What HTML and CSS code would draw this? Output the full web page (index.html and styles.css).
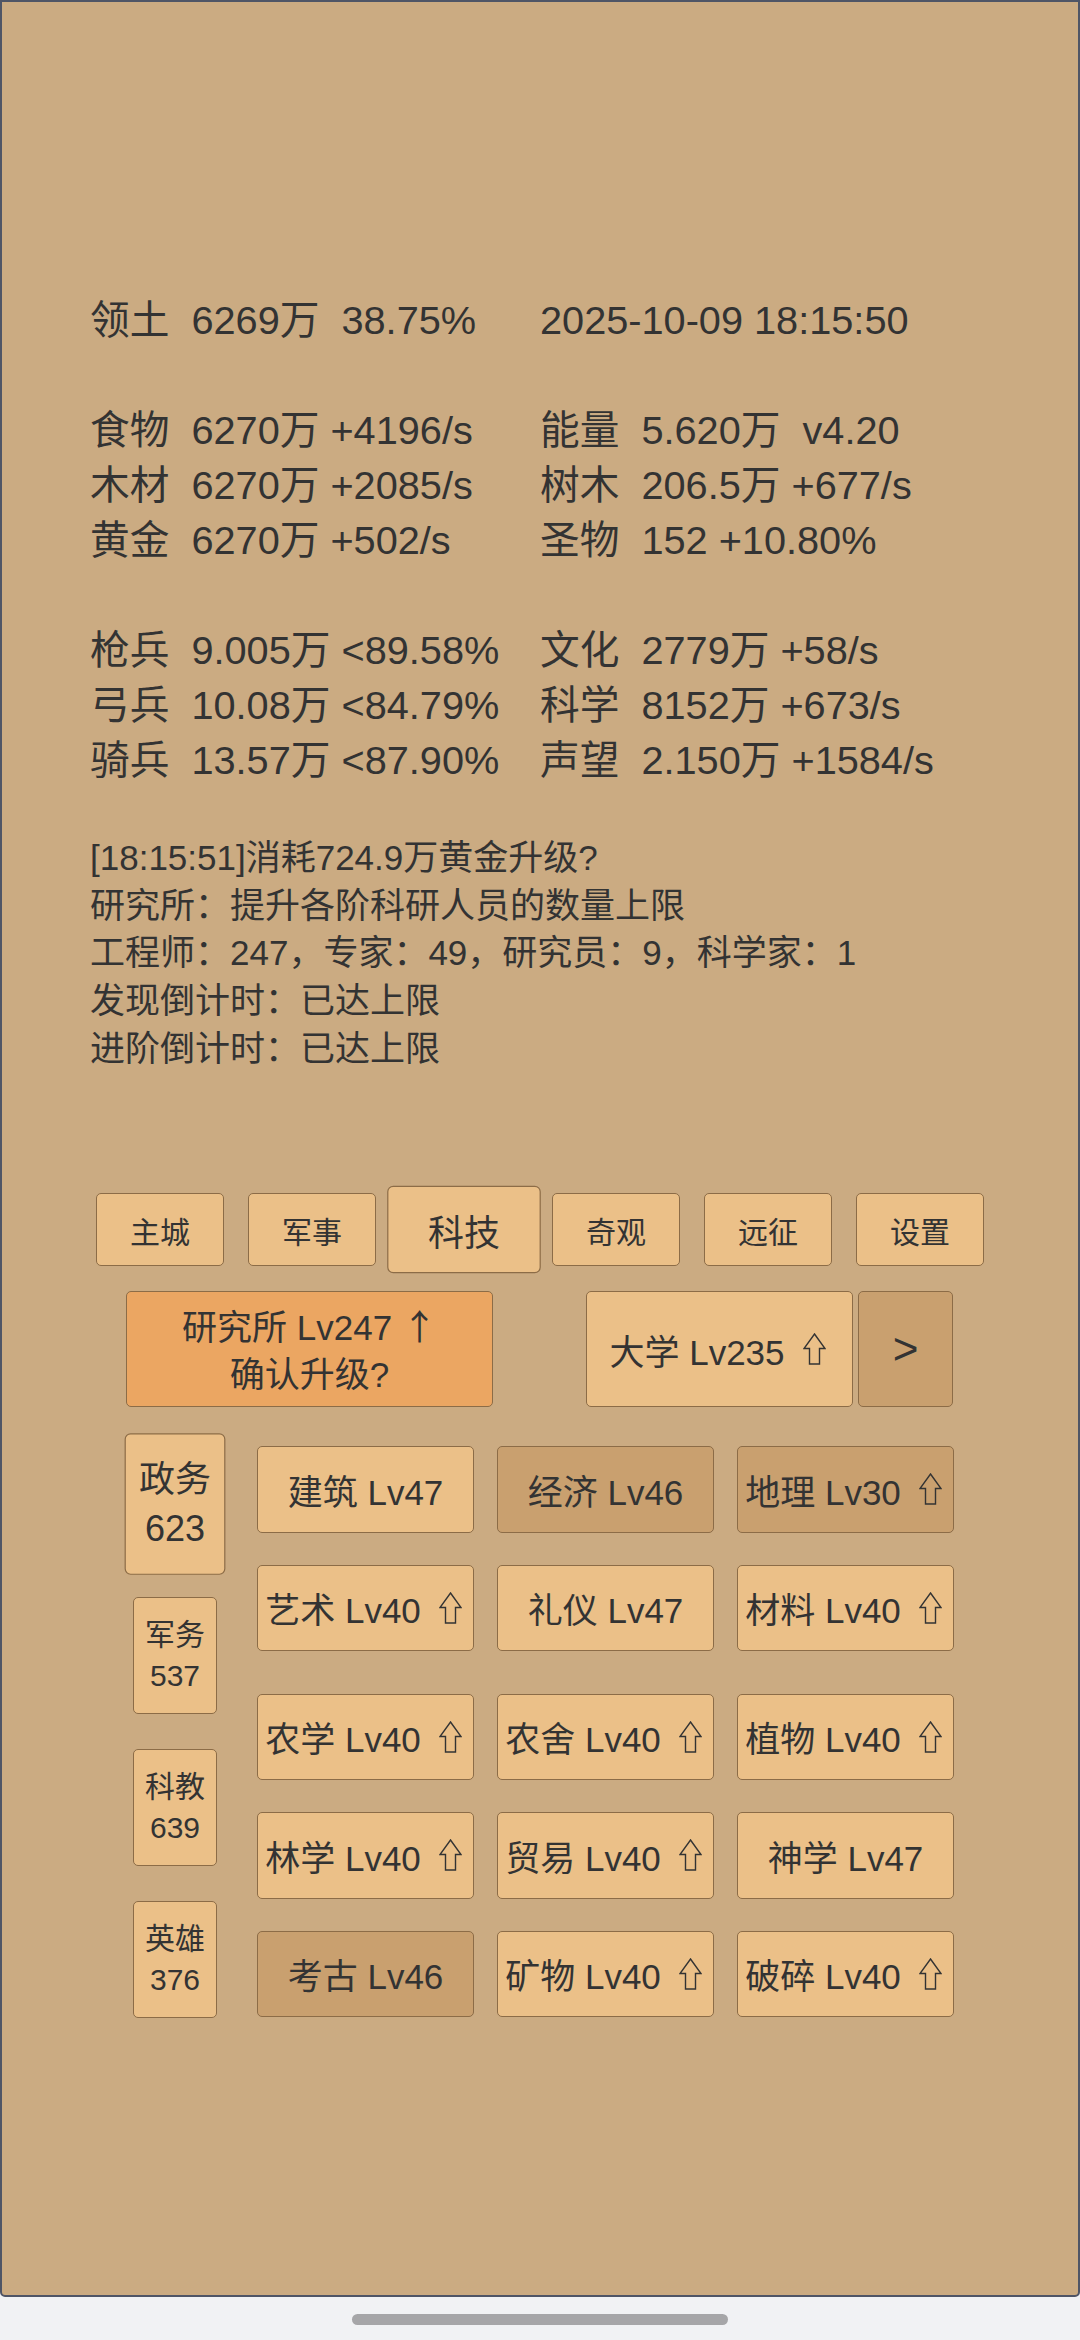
FILE: index.html
```html
<!DOCTYPE html>
<html lang="zh-CN">
<head>
<meta charset="utf-8">
<meta name="viewport" content="width=1080">
<link rel="stylesheet" href="styles.css">
</head>
<body>
<div class="panel">
  <div class="stats">
    <div class="cell">领土  6269万  38.75%</div><div class="cell">2025-10-09 18:15:50</div>
    <div class="blank"></div>
    <div class="cell">食物  6270万 +4196/s</div><div class="cell">能量  5.620万  v4.20</div>
    <div class="cell">木材  6270万 +2085/s</div><div class="cell">树木  206.5万 +677/s</div>
    <div class="cell">黄金  6270万 +502/s</div><div class="cell">圣物  152 +10.80%</div>
    <div class="blank"></div>
    <div class="cell">枪兵  9.005万 &lt;89.58%</div><div class="cell">文化  2779万 +58/s</div>
    <div class="cell">弓兵  10.08万 &lt;84.79%</div><div class="cell">科学  8152万 +673/s</div>
    <div class="cell">骑兵  13.57万 &lt;87.90%</div><div class="cell">声望  2.150万 +1584/s</div>
  </div>

  <div class="log">
    <div>[18:15:51]消耗724.9万黄金升级?</div>
    <div>研究所：提升各阶科研人员的数量上限</div>
    <div>工程师：247，专家：49，研究员：9，科学家：1</div>
    <div>发现倒计时：已达上限</div>
    <div>进阶倒计时：已达上限</div>
  </div>

  <div class="nav">
    <div class="btn">主城</div>
    <div class="btn">军事</div>
    <div class="btn active">科技</div>
    <div class="btn">奇观</div>
    <div class="btn">远征</div>
    <div class="btn">设置</div>
  </div>

  <div class="build">
    <div class="btn main"><div>研究所 Lv247 <span class="cjk">↑</span><br>确认升级?</div></div>
    <div class="btn uni">大学 Lv235<svg class="up" viewBox="0 0 23 32"><path d="M11.5 1 L22 15.5 L16.5 15.5 L16.5 31 L6.5 31 L6.5 15.5 L1 15.5 Z"/></svg></div>
    <div class="btn next">&gt;</div>
  </div>

  <div class="tech">
    <div class="side">
      <div class="btn active">政务<br>623</div>
      <div class="btn">军务<br>537</div>
      <div class="btn">科教<br>639</div>
      <div class="btn">英雄<br>376</div>
    </div>
    <div class="grid">
      <div class="r">
        <div class="btn">建筑 Lv47</div>
        <div class="btn dark">经济 Lv46</div>
        <div class="btn dark">地理 Lv30<svg class="up" viewBox="0 0 23 32"><path d="M11.5 1 L22 15.5 L16.5 15.5 L16.5 31 L6.5 31 L6.5 15.5 L1 15.5 Z"/></svg></div>
      </div>
      <div class="r">
        <div class="btn">艺术 Lv40<svg class="up" viewBox="0 0 23 32"><path d="M11.5 1 L22 15.5 L16.5 15.5 L16.5 31 L6.5 31 L6.5 15.5 L1 15.5 Z"/></svg></div>
        <div class="btn">礼仪 Lv47</div>
        <div class="btn">材料 Lv40<svg class="up" viewBox="0 0 23 32"><path d="M11.5 1 L22 15.5 L16.5 15.5 L16.5 31 L6.5 31 L6.5 15.5 L1 15.5 Z"/></svg></div>
      </div>
      <div class="r sep">
        <div class="btn">农学 Lv40<svg class="up" viewBox="0 0 23 32"><path d="M11.5 1 L22 15.5 L16.5 15.5 L16.5 31 L6.5 31 L6.5 15.5 L1 15.5 Z"/></svg></div>
        <div class="btn">农舍 Lv40<svg class="up" viewBox="0 0 23 32"><path d="M11.5 1 L22 15.5 L16.5 15.5 L16.5 31 L6.5 31 L6.5 15.5 L1 15.5 Z"/></svg></div>
        <div class="btn">植物 Lv40<svg class="up" viewBox="0 0 23 32"><path d="M11.5 1 L22 15.5 L16.5 15.5 L16.5 31 L6.5 31 L6.5 15.5 L1 15.5 Z"/></svg></div>
      </div>
      <div class="r">
        <div class="btn">林学 Lv40<svg class="up" viewBox="0 0 23 32"><path d="M11.5 1 L22 15.5 L16.5 15.5 L16.5 31 L6.5 31 L6.5 15.5 L1 15.5 Z"/></svg></div>
        <div class="btn">贸易 Lv40<svg class="up" viewBox="0 0 23 32"><path d="M11.5 1 L22 15.5 L16.5 15.5 L16.5 31 L6.5 31 L6.5 15.5 L1 15.5 Z"/></svg></div>
        <div class="btn">神学 Lv47</div>
      </div>
      <div class="r">
        <div class="btn dark">考古 Lv46</div>
        <div class="btn">矿物 Lv40<svg class="up" viewBox="0 0 23 32"><path d="M11.5 1 L22 15.5 L16.5 15.5 L16.5 31 L6.5 31 L6.5 15.5 L1 15.5 Z"/></svg></div>
        <div class="btn">破碎 Lv40<svg class="up" viewBox="0 0 23 32"><path d="M11.5 1 L22 15.5 L16.5 15.5 L16.5 31 L6.5 31 L6.5 15.5 L1 15.5 Z"/></svg></div>
      </div>
    </div>
  </div>
</div>
<div class="home"></div>
</body>
</html>
```

FILE: styles.css
```css
* {
  box-sizing: border-box;
  margin: 0;
  padding: 0;
}

html, body {
  width: 1080px;
  height: 2340px;
  overflow: hidden;
}

body {
  background: #F1F2F4;
  font-family: "Liberation Sans", "Noto Sans CJK SC", sans-serif;
  color: #333333;
}

.panel {
  height: 2297px;
  border: 2px solid #4f5566;
  border-radius: 0 0 5px 5px;
  background: #CBAB82;
  padding-top: 290.5px;
}

.stats {
  display: grid;
  grid-template-columns: 450px 1fr;
  margin-left: 88px;
  font-size: 39.7px;
  line-height: 55px;
}

.stats .cell {
  white-space: pre;
}

.stats .blank {
  grid-column: 1 / -1;
  height: 55px;
}

.log {
  margin: 46.5px 0 0 88px;
  font-size: 35px;
  line-height: 47.7px;
}

.btn {
  display: flex;
  align-items: center;
  justify-content: center;
  text-align: center;
  background: #EBC088;
  border: 1px solid #8c6c47;
  border-radius: 5px;
  white-space: nowrap;
}

.btn.dark {
  background: #C9A06F;
}

.nav {
  display: flex;
  justify-content: center;
  margin-top: 120.5px;
}

.nav .btn {
  width: 128px;
  height: 73px;
  margin: 0 12px;
  font-size: 30px;
}

.btn.active {
  transform: scale(1.2);
}

.build {
  display: flex;
  height: 116px;
  margin: 25px 0 0 124px;
}

.build .main {
  width: 367px;
  background: #EBA662;
  font-size: 35px;
  line-height: 47px;
}

.cjk {
  font-family: "Noto Sans CJK SC", sans-serif;
}

.build .uni {
  width: 267px;
  margin-left: 93px;
  font-size: 35px;
}

.build .next {
  width: 95px;
  margin-left: 5px;
  background: #C9A06F;
  font-size: 44px;
}

.tech {
  display: flex;
  margin: 37.5px 0 0 131px;
}

.side {
  width: 84px;
  display: flex;
  flex-direction: column;
  gap: 34.5px;
}

.side .btn {
  height: 117.5px;
  font-size: 30px;
  line-height: 41px;
}

.grid {
  margin-left: 40px;
  padding-top: 1.5px;
  display: flex;
  flex-direction: column;
  gap: 32px;
}

.grid .r {
  display: flex;
  gap: 23px;
}

.grid .r.sep {
  margin-top: 10.5px;
}

.grid .btn {
  width: 217px;
  height: 86.5px;
  font-size: 35px;
}

.up {
  flex: none;
  width: 23px;
  height: 32px;
  margin: 0 4px 0 18px;
  fill: none;
  stroke: #333333;
  stroke-width: 1.4;
  stroke-linejoin: miter;
}

.home {
  width: 376px;
  height: 11px;
  margin: 17px auto 0;
  border-radius: 6px;
  background: #A6A6A8;
}
```
